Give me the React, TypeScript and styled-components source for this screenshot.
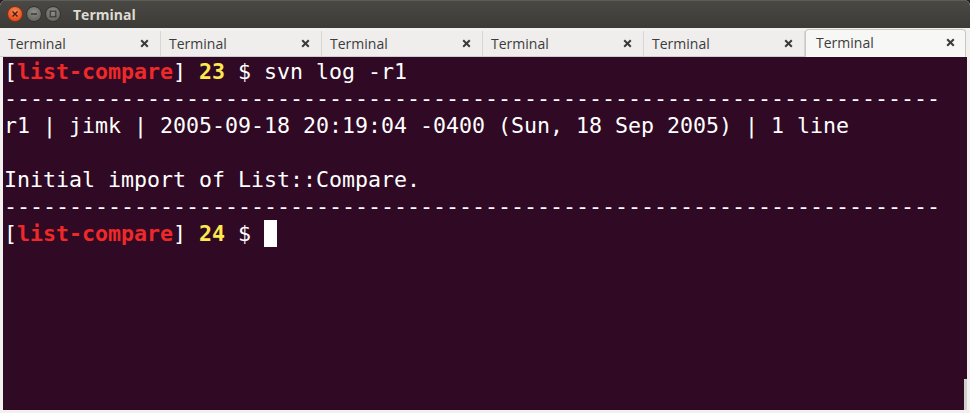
import styled, { createGlobalStyle } from "styled-components";

const GlobalStyle = createGlobalStyle`
  html, body {
    margin: 0;
    padding: 0;
    background: #2b1d24;
  }
`;

const Window = styled.div`
  width: 970px;
  height: 413px;
  display: flex;
  flex-direction: column;
  background: #f2f1f0;
  border-radius: 6px 6px 0 0;
  overflow: hidden;
`;

const TitleBar = styled.div`
  height: 28px;
  flex: none;
  display: flex;
  align-items: center;
  padding-left: 7px;
  background: linear-gradient(#4a4944, #3c3b37);
  box-shadow: inset 0 1px 0 #5e5d57;
`;

const Buttons = styled.div`
  display: flex;
  gap: 3px;
`;

const WinButton = styled.div<{ $close?: boolean }>`
  width: 14px;
  height: 14px;
  border-radius: 50%;
  display: flex;
  align-items: center;
  justify-content: center;
  border: 1px solid ${(p) => (p.$close ? "#8a2f14" : "#34332f")};
  background: ${(p) =>
    p.$close
      ? "radial-gradient(circle at 50% 35%, #f58a5d, #e3511f 70%)"
      : "radial-gradient(circle at 50% 35%, #8e8d87, #6a6964 70%)"};
`;

const Title = styled.div`
  margin-left: 12px;
  color: #dfdbd2;
  font-family: "Open Sans", "DejaVu Sans", sans-serif;
  font-weight: 700;
  font-size: 14px;
`;

const TabBar = styled.div`
  height: 29px;
  flex: none;
  display: flex;
  align-items: flex-end;
  background: #f2f1f0;
  padding-right: 4px;
  box-sizing: border-box;
`;

const Tab = styled.div<{ $active?: boolean }>`
  width: 161px;
  box-sizing: border-box;
  display: flex;
  align-items: center;
  justify-content: space-between;
  font-family: "Open Sans", "DejaVu Sans", sans-serif;
  font-size: 14px;
  color: #3c3c3c;
  padding: ${(p) => (p.$active ? "0 10px 2px 10px" : "0 11px 1px 8px")};
  height: ${(p) => (p.$active ? "28px" : "26px")};
  background: ${(p) => (p.$active ? "#f7f7f6" : "#efeeed")};
  border-right: 1px solid ${(p) => (p.$active ? "#c9c7c3" : "#d8d6d2")};
  border-left: ${(p) => (p.$active ? "1px solid #c9c7c3" : "none")};
  border-top: ${(p) => (p.$active ? "1px solid #c9c7c3" : "none")};
  border-bottom: ${(p) => (p.$active ? "none" : "1px solid #cfcdc9")};
  border-radius: ${(p) => (p.$active ? "4px 4px 0 0" : "0")};
`;

const CloseMark = styled.svg`
  width: 9px;
  height: 9px;
  flex: none;
`;

const Frame = styled.div`
  flex: 1;
  display: flex;
  padding: 0 3px 3px 3px;
`;

const Screen = styled.div`
  flex: 1;
  position: relative;
  background: #300a24;
  padding: 1px 0 0 1px;
  font-family: "DejaVu Sans Mono", "Liberation Mono", monospace;
  font-size: 21.6px;
  line-height: 27px;
  color: #ffffff;
  white-space: pre;
`;

const Line = styled.div`
  height: 27px;
`;

const Red = styled.span`
  color: #ef2929;
  font-weight: 700;
`;

const Yellow = styled.span`
  color: #fce94f;
  font-weight: 700;
`;

const Cursor = styled.span`
  display: inline-block;
  width: 13px;
  height: 27px;
  background: #ffffff;
  vertical-align: top;
`;

const Thumb = styled.div`
  position: absolute;
  right: 0;
  bottom: 0;
  width: 3px;
  height: 31px;
  background: #d2d0cc;
`;

const dashes = "-".repeat(72);

function Prompt({ n }: { n: number }) {
  return (
    <>
      [<Red>list-compare</Red>] <Yellow>{n}</Yellow> ${" "}
    </>
  );
}

export default function App() {
  const tabs = [false, false, false, false, false, true];
  return (
    <>
      <GlobalStyle />
      <Window>
        <TitleBar>
          <Buttons>
            <WinButton $close>
              <svg width="8" height="8" viewBox="0 0 8 8">
                <path d="M1.5 1.5 L6.5 6.5 M6.5 1.5 L1.5 6.5" stroke="#4a1a0a" strokeWidth="1.4" />
              </svg>
            </WinButton>
            <WinButton>
              <svg width="8" height="8" viewBox="0 0 8 8">
                <path d="M1 4 H7" stroke="#3a3935" strokeWidth="1.6" />
              </svg>
            </WinButton>
            <WinButton>
              <svg width="8" height="8" viewBox="0 0 8 8">
                <rect x="1.2" y="1.2" width="5.6" height="5.6" fill="none" stroke="#3a3935" strokeWidth="1.2" />
              </svg>
            </WinButton>
          </Buttons>
          <Title>Terminal</Title>
        </TitleBar>
        <TabBar>
          {tabs.map((active, i) => (
            <Tab key={i} $active={active}>
              <span>Terminal</span>
              <CloseMark viewBox="0 0 9 9">
                <path d="M1.2 1.2 L7.8 7.8 M7.8 1.2 L1.2 7.8" stroke="#3a3a3a" strokeWidth="2" />
              </CloseMark>
            </Tab>
          ))}
        </TabBar>
        <Frame>
          <Screen>
            <Line>
              <Prompt n={23} />svn log -r1
            </Line>
            <Line>{dashes}</Line>
            <Line>r1 | jimk | 2005-09-18 20:19:04 -0400 (Sun, 18 Sep 2005) | 1 line</Line>
            <Line />
            <Line>Initial import of List::Compare.</Line>
            <Line>{dashes}</Line>
            <Line>
              <Prompt n={24} />
              <Cursor />
            </Line>
            <Thumb />
          </Screen>
        </Frame>
      </Window>
    </>
  );
}
